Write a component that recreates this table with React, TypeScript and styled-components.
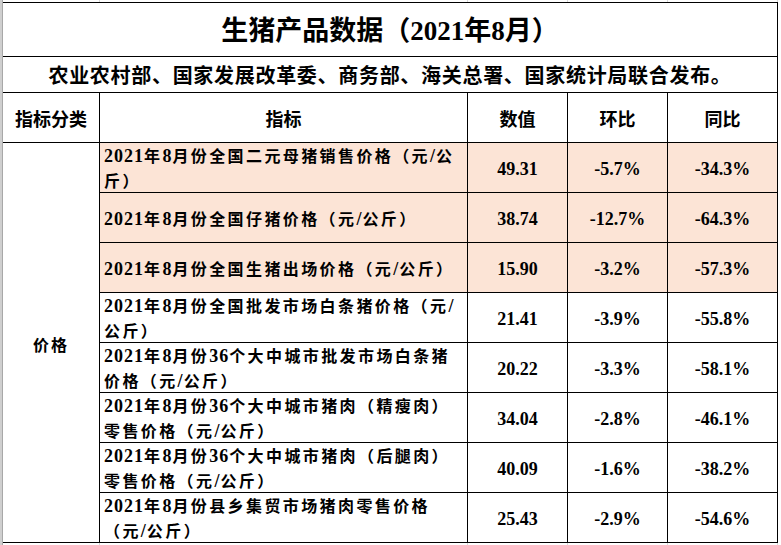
import React from "react";
import styled, { createGlobalStyle } from "styled-components";

type PriceRow = {
  lines: string[];
  value: string;
  mom: string;
  yoy: string;
  highlight?: boolean;
};

const priceRows: PriceRow[] = [
  { lines: ["2021年8月份全国二元母猪销售价格（元/公", "斤）"], value: "49.31", mom: "-5.7%", yoy: "-34.3%", highlight: true },
  { lines: ["2021年8月份全国仔猪价格（元/公斤）"], value: "38.74", mom: "-12.7%", yoy: "-64.3%", highlight: true },
  { lines: ["2021年8月份全国生猪出场价格（元/公斤）"], value: "15.90", mom: "-3.2%", yoy: "-57.3%", highlight: true },
  { lines: ["2021年8月份全国批发市场白条猪价格（元/", "公斤）"], value: "21.41", mom: "-3.9%", yoy: "-55.8%" },
  { lines: ["2021年8月份36个大中城市批发市场白条猪", "价格（元/公斤）"], value: "20.22", mom: "-3.3%", yoy: "-58.1%" },
  { lines: ["2021年8月份36个大中城市猪肉（精瘦肉）", "零售价格（元/公斤）"], value: "34.04", mom: "-2.8%", yoy: "-46.1%" },
  { lines: ["2021年8月份36个大中城市猪肉（后腿肉）", "零售价格（元/公斤）"], value: "40.09", mom: "-1.6%", yoy: "-38.2%" },
  { lines: ["2021年8月份县乡集贸市场猪肉零售价格", "（元/公斤）"], value: "25.43", mom: "-2.9%", yoy: "-54.6%" },
];

const COLUMNS = "97px 368px 100px 100px 110px";

// digits and slashes are set in the latin face, like the sheet does
function splitRuns(text: string) {
  return text.split(/([0-9A-Za-z./%]+)/).filter(Boolean).map((part, i) =>
    /^[0-9A-Za-z./%]+$/.test(part) ? <Latin key={i}>{part}</Latin> : <Han key={i}>{part}</Han>
  );
}

const App: React.FC = () => {
  return (
    <>
      <GlobalStyle />
      <Page>
        <RowHeaderEdge />
        <Sheet>
          <GridStrip>
            <span /><span /><span /><span /><span />
          </GridStrip>
          <Table>
            <TitleCell>生猪产品数据（2021年8月）</TitleCell>
            <NoticeCell>农业农村部、国家发展改革委、商务部、海关总署、国家统计局联合发布。</NoticeCell>
            <HeadCell>指标分类</HeadCell>
            <HeadCell>指标</HeadCell>
            <HeadCell>数值</HeadCell>
            <HeadCell>环比</HeadCell>
            <HeadCell>同比</HeadCell>
            <CategoryCell>价格</CategoryCell>
            {priceRows.map((row) => (
              <React.Fragment key={row.lines[0]}>
                <IndicatorCell $highlight={row.highlight}>
                  <div>
                    {row.lines.map((line) => (
                      <Line key={line}>{splitRuns(line)}</Line>
                    ))}
                  </div>
                </IndicatorCell>
                <NumberCell $highlight={row.highlight}>{row.value}</NumberCell>
                <NumberCell $highlight={row.highlight}>{row.mom}</NumberCell>
                <NumberCell $highlight={row.highlight}>{row.yoy}</NumberCell>
              </React.Fragment>
            ))}
          </Table>
          <GridStrip>
            <span /><span /><span /><span /><span />
          </GridStrip>
        </Sheet>
      </Page>
    </>
  );
};

const GlobalStyle = createGlobalStyle`
  html, body {
    margin: 0;
    padding: 0;
    background: #ffffff;
  }
  body {
    font-family: "Liberation Serif", "Noto Sans CJK SC", serif;
    color: #000000;
  }
`;

const Page = styled.div`
  display: flex;
  width: 781px;
  height: 545px;
  overflow: hidden;
`;

const RowHeaderEdge = styled.div`
  flex: none;
  width: 2px;
  background: #cfcfcf;
  border-right: 1px solid #a8a8a8;
`;

const Sheet = styled.div`
  display: flex;
  flex-direction: column;
`;

const GridStrip = styled.div`
  display: grid;
  grid-template-columns: ${COLUMNS};
  height: 2px;

  & > span {
    border-right: 1px solid #dadada;
  }
`;

const Table = styled.div`
  display: grid;
  grid-template-columns: ${COLUMNS};
  grid-template-rows: 54px 36px 50px repeat(8, 50px);
  border-top: 1px solid #000000;
`;

const Cell = styled.div<{ $highlight?: boolean }>`
  box-sizing: border-box;
  display: flex;
  align-items: center;
  justify-content: center;
  border-right: 1px solid #000000;
  border-bottom: 1px solid #000000;
  background: ${({ $highlight }) => ($highlight ? "#fce4d6" : "#ffffff")};
  font-weight: 700;
  white-space: nowrap;
`;

const TitleCell = styled(Cell)`
  grid-column: span 5;
  font-size: 27px;
  line-height: 30px;
  padding-top: 2px;
`;

const NoticeCell = styled(Cell)`
  grid-column: span 5;
  font-size: 20px;
  letter-spacing: 0.7px;
  line-height: 24px;
  padding-top: 3px;
`;

const HeadCell = styled(Cell)`
  font-size: 18px;
  line-height: 22px;
  padding-top: 4px;
`;

const CategoryCell = styled(Cell)`
  grid-row: span 8;
  font-size: 16px;
  letter-spacing: 2px;
  padding-top: 2px;
`;

const IndicatorCell = styled(Cell)`
  justify-content: flex-start;
  padding: 3px 0 0 4px;
  line-height: 25px;
`;

const Line = styled.div`
  white-space: nowrap;
`;

const Han = styled.span`
  font-size: 16px;
  letter-spacing: 2.4px;
`;

const Latin = styled.span`
  font-size: 18px;
  letter-spacing: 1px;
`;

const NumberCell = styled(Cell)`
  font-size: 18px;
  line-height: 22px;
  padding-top: 3px;
`;

export default App;
